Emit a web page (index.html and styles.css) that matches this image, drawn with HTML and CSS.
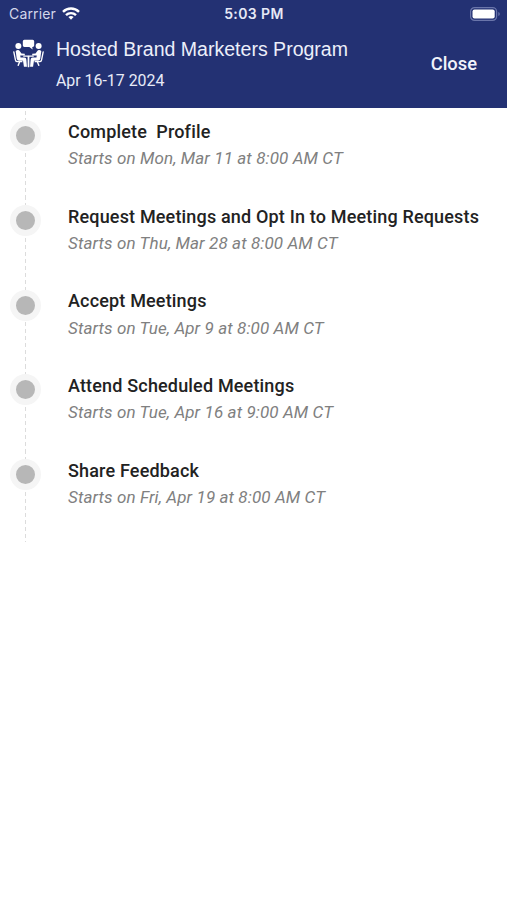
FILE: index.html
```html
<!DOCTYPE html>
<html lang="en">
<head>
<meta charset="utf-8">
<title>Hosted Brand Marketers Program</title>
<link rel="stylesheet" href="styles.css">
</head>
<body>
<header class="header">
  <div class="status">
    <div class="carrier"><span class="carrier-name">Carrier</span>
      <svg class="wifi" viewBox="0 0 18 13" fill="none" stroke="#fff" stroke-width="2.4"><path d="M1 4.8a11.4 11.4 0 0 1 16 0M4 8.2a7.1 7.1 0 0 1 10 0"/><path d="M9 12.7 6.4 10.1a3.8 3.8 0 0 1 5.2 0Z" fill="#fff" stroke="none"/></svg>
    </div>
    <span class="time">5:03 PM</span>
    <svg class="battery" viewBox="0 0 31 14"><rect x=".6" y=".6" width="26" height="12.8" rx="4" fill="none" stroke="#6a75aa" stroke-width="1.2"/><rect x="2.5" y="2.5" width="22.2" height="9" rx="2" fill="#fff"/><path d="M28.3 5c2 .7 2 3.3 0 4Z" fill="#6a75aa"/></svg>
  </div>
  <div class="bar">
    <svg class="logo" viewBox="0 0 30 28" fill="none" stroke="#fff" stroke-linecap="round" stroke-linejoin="round">
      <path d="M11 .7h8q1.500 0 1.500 1.500v4q0 1.400-1.500 1.400h-.4l.4 2.600-3.200-2.600H11q-1.500 0-1.500-1.400v-4Q9.500.7 11 .7Z" fill="#fff" stroke="none"/>
      <circle cx="5.200" cy="6.800" r="2.900" fill="#fff" stroke="none"/><circle cx="24.800" cy="6.800" r="2.900" fill="#fff" stroke="none"/>
      <path d="M2.600 11.500q2.600-2 4.200.5l1.400 2 3.200.2v1.800l-4.400-.1.300 2h3.700q1.800 0 1.900 1.800l.6 7.200H10.600l-.9-5.800H5.800q-1.800 0-2.200-1.900Z" fill="#fff" stroke="none"/>
      <path d="M27.400 11.500q-2.600-2-4.200.5l-1.400 2-3.200.2v1.800l4.400-.1-.3 2H19q-1.800 0-1.900 1.800l-.6 7.200h2.900l.9-5.800h3.900q1.800 0 2.200-1.900Z" fill="#fff" stroke="none"/>
      <path d="M.8 12.500 2.400 20.300q.3 1.600 2 1.600h4.200M29.200 12.500 27.600 20.300q-.3 1.600-2 1.600h-4.200M6.500 22 5 25.500M23.500 22l1.500 3.500M10.500 16.600h9" stroke-width="1.300"/>
      <path d="M15 17v9.500" stroke-width="1.700"/>
    </svg>
    <div class="headings">
      <h1 class="title">Hosted Brand Marketers Program</h1>
      <p class="dates">Apr 16-17 2024</p>
    </div>
    <span class="close">Close</span>
  </div>
</header>
<main class="timeline">
  <section class="step"><div class="rail"><i class="dot"></i></div><div><h2 class="name">Complete&nbsp; Profile</h2><p class="when">Starts on Mon, Mar 11 at 8:00 AM CT</p></div></section>
  <section class="step"><div class="rail"><i class="dot"></i></div><div><h2 class="name">Request Meetings and Opt In to Meeting Requests</h2><p class="when">Starts on Thu, Mar 28 at 8:00 AM CT</p></div></section>
  <section class="step"><div class="rail"><i class="dot"></i></div><div><h2 class="name">Accept Meetings</h2><p class="when">Starts on Tue, Apr 9 at 8:00 AM CT</p></div></section>
  <section class="step"><div class="rail"><i class="dot"></i></div><div><h2 class="name">Attend Scheduled Meetings</h2><p class="when">Starts on Tue, Apr 16 at 9:00 AM CT</p></div></section>
  <section class="step"><div class="rail"><i class="dot"></i></div><div><h2 class="name">Share Feedback</h2><p class="when">Starts on Fri, Apr 19 at 8:00 AM CT</p></div></section>
</main>
</body>
</html>
```
FILE: styles.css
```css
* { box-sizing: border-box; margin: 0; padding: 0; }
body { background: #fff; font-family: Roboto, "Liberation Sans", sans-serif; }
.header { height: 108px; background: #233173; color: #fff; }
.status { display: grid; grid-template-columns: 1fr auto 1fr; align-items: center; height: 28px; padding: 0 8px 0 9px; }
.carrier { display: flex; align-items: center; gap: 6px; }
.carrier-name { font: 400 14px/20px Inter, sans-serif; letter-spacing: .15px; color: #d3d7ea; }
.wifi { width: 18px; height: 13px; margin-top: -1px; }
.time { font: 600 14px/20px Inter, sans-serif; letter-spacing: .4px; color: #e6e9f6; }
.battery { width: 31px; height: 14px; justify-self: end; margin: -1px -2px 0 0; }
.bar { display: flex; height: 80px; padding: 0 30px 0 13px; }
.logo { width: 31px; height: 29px; margin-top: 11px; }
.headings { flex: 1; padding: 9px 0 0 12px; }
.title { font: 400 19.55px/24px "Liberation Sans", sans-serif; white-space: nowrap; color: #eceffa; }
.dates { margin-top: 10px; font-size: 15.9px; line-height: 20px; color: #e8ebf7; }
.close { margin-top: 24px; font-size: 18.35px; line-height: 24px; font-weight: 500; color: #f1f3fb; }
.timeline { padding-top: 3px; }
.step { display: grid; grid-template-columns: 68px 1fr; height: 84.7px; }
.step:last-child { height: 92px; }
.rail { padding: 9.3px 0 0 10px; background: repeating-linear-gradient(#dcdcdc 0 4px, transparent 4px 7px) 25px 0 / 1px 100% no-repeat; }
.dot { display: block; width: 31px; height: 31px; border: 6px solid #f5f5f5; border-radius: 50%; background: #b7b7b7; }
.name { padding-top: 9px; font-size: 18px; letter-spacing: .17px; line-height: 24px; font-weight: 500; color: #222; white-space: nowrap; }
.when { margin-top: 3.2px; font-size: 17px; letter-spacing: .1px; line-height: 22px; font-style: italic; color: #808080; white-space: nowrap; }
```
